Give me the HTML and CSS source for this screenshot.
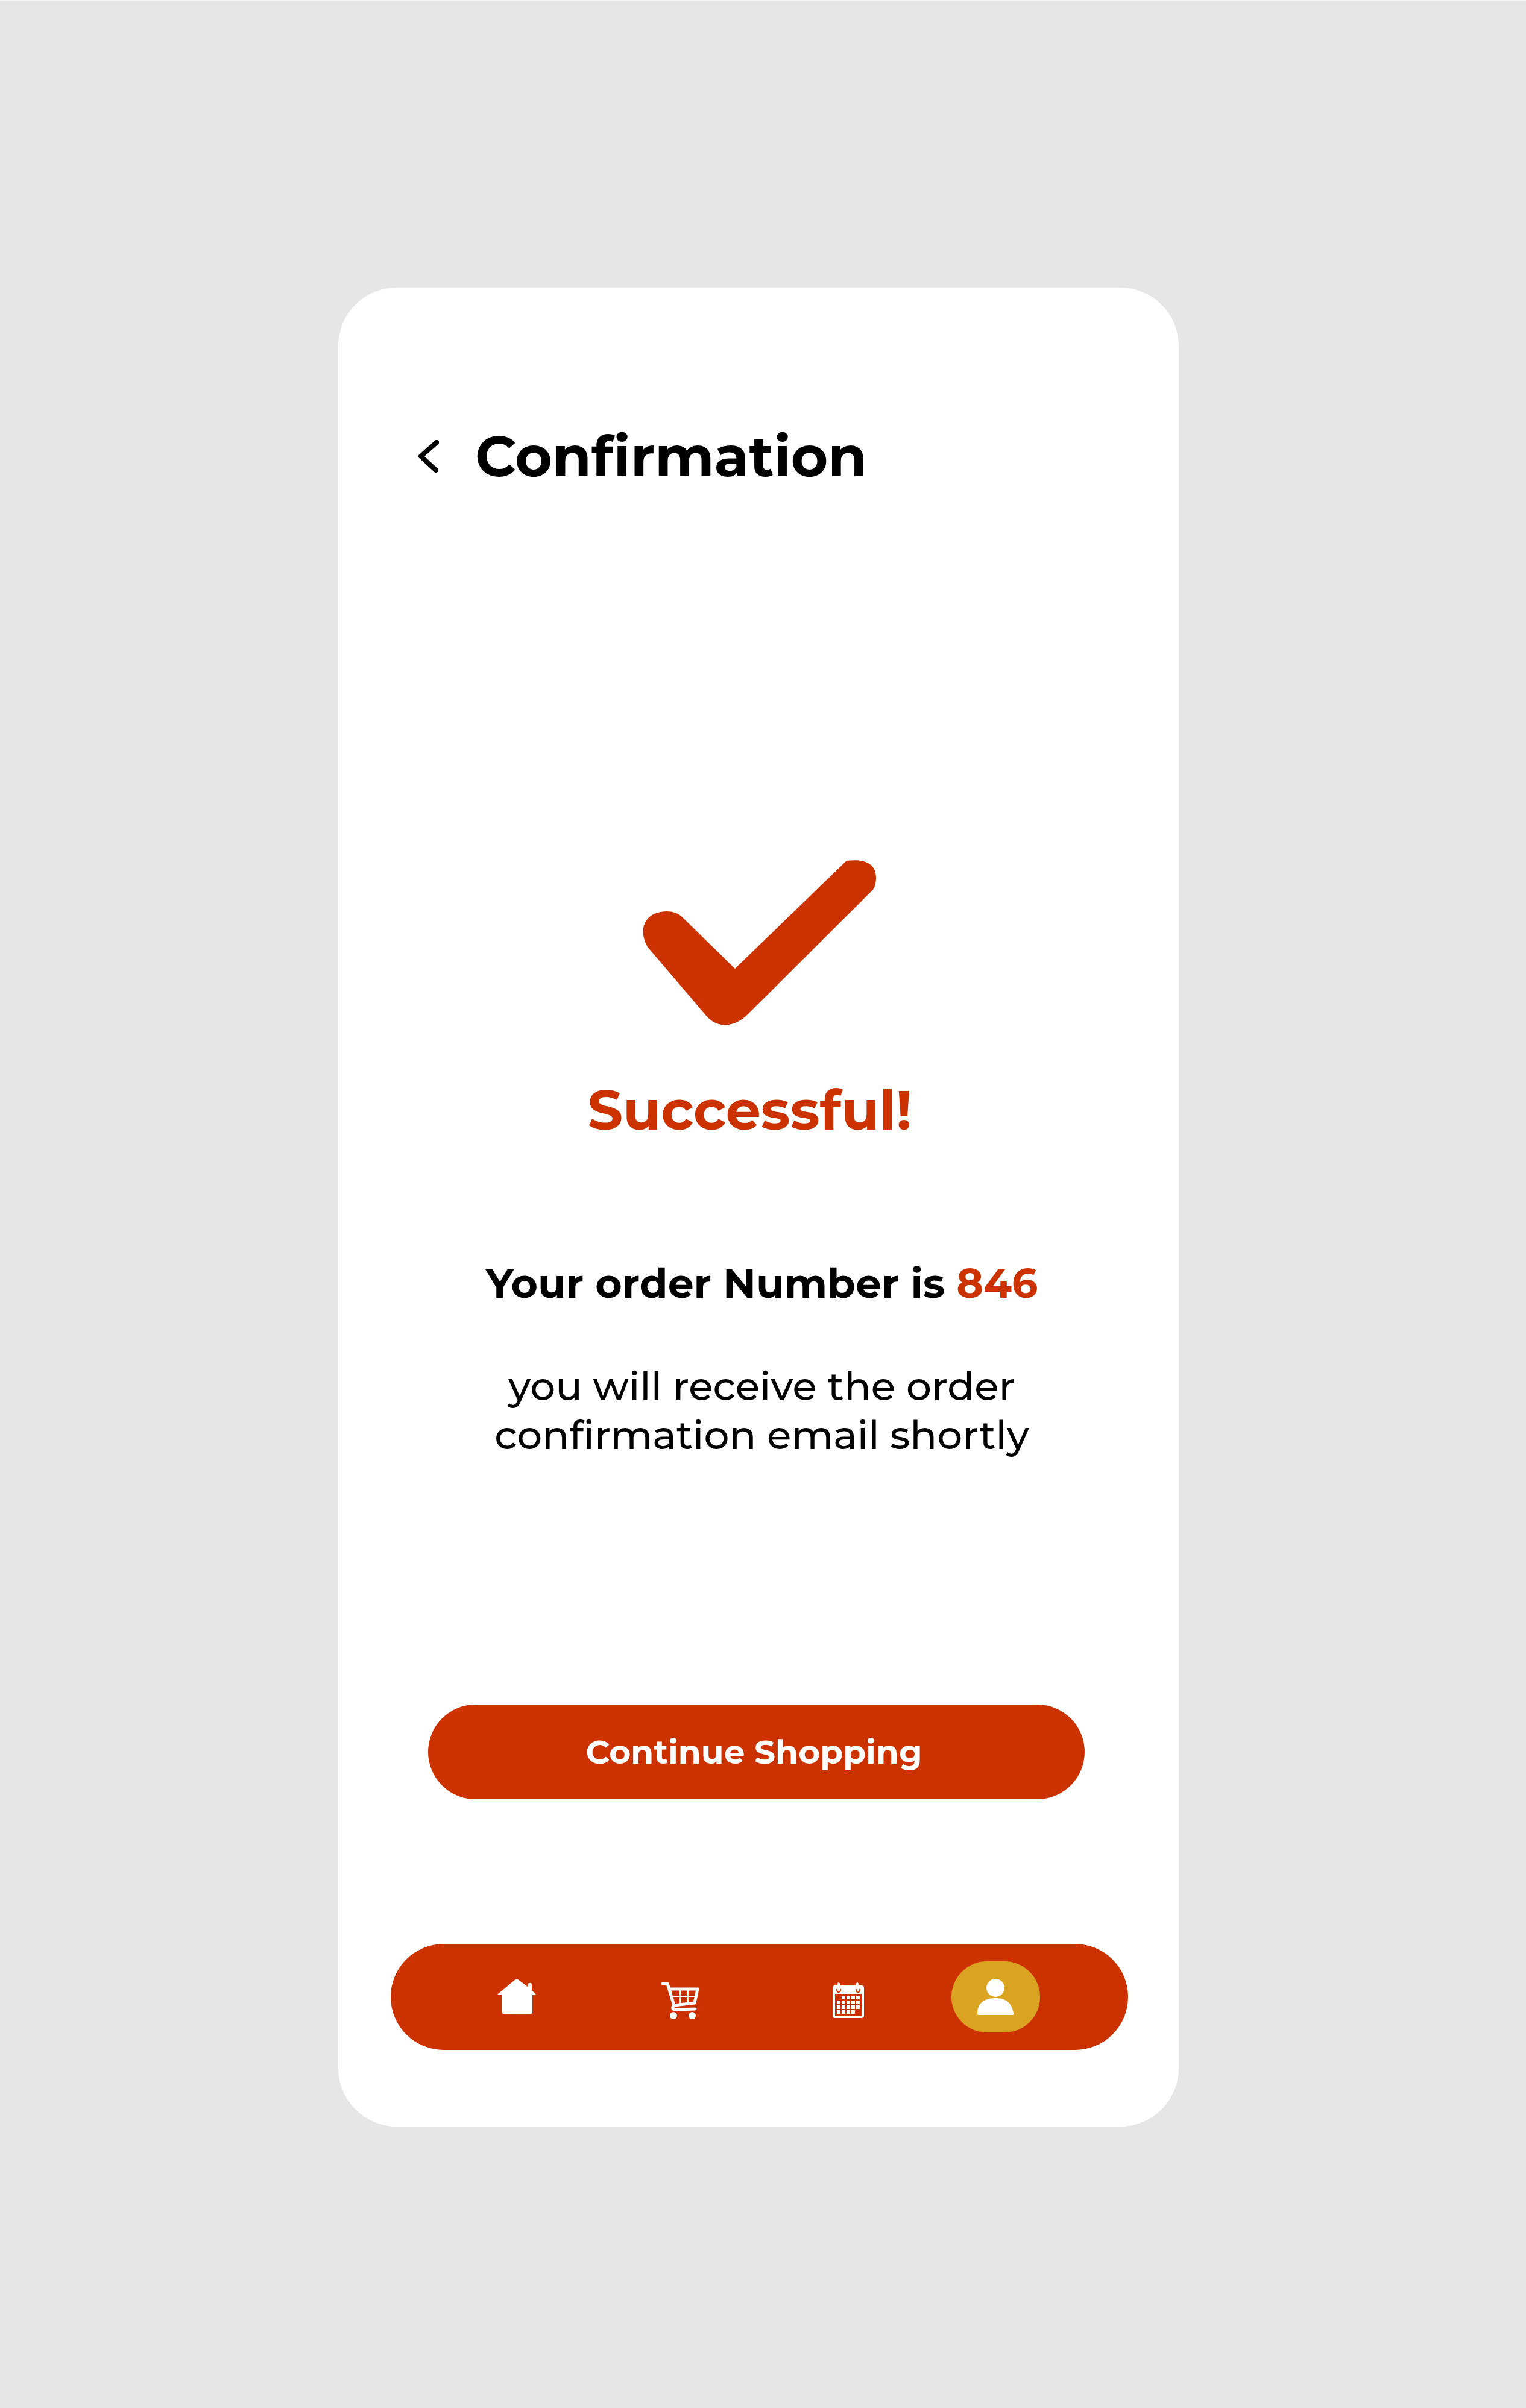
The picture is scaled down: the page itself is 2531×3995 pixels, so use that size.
FILE: index.html
```html
<!DOCTYPE html>
<html lang="en">
<head>
<meta charset="utf-8">
<meta name="viewport" content="width=device-width, initial-scale=1">
<title>Confirmation</title>
<link rel="stylesheet" href="styles.css">
</head>
<body>
<main class="screen">
  <header class="header">
    <button class="back" type="button" aria-label="Back">
      <svg viewBox="0 0 34 54" width="34" height="54" aria-hidden="true"><path d="M30 4 4 27l25 23" fill="none" stroke="currentColor" stroke-width="8" stroke-linecap="round" stroke-linejoin="round"/></svg>
    </button>
    <h1 class="title">Confirmation</h1>
  </header>

  <section class="result">
    <svg class="check" viewBox="0 0 388 274" width="388" height="274" aria-hidden="true"><path d="M338 1C364-2 387 3 387 29Q387 42 382 49L173 257C152 277 125 280 106 259L8 144C-8 116 2 86 39 85Q56 85 65 94L153 180Z" fill="currentColor"/></svg>
    <h2 class="status">Successful!</h2>
    <p class="order">Your order Number is <span class="number">846</span></p>
    <p class="note">you will receive the order<br>confirmation email shortly</p>
  </section>

  <button class="continue" type="button">Continue Shopping</button>

  <nav class="tabs" aria-label="Main">
    <a class="tab" href="#home" aria-label="Home">
      <svg viewBox="0 0 64 60" width="64" height="60" aria-hidden="true"><path d="M30 1q2-1 4 0l16 12 1-4q0-2 2-2h2q2 0 2 2v10l6 6q2 2-1 2h-4v29q0 2-3 2H10q-3 0-3-3V27H2q-3 0-1-2z" fill="currentColor"/></svg>
    </a>
    <a class="tab tab-low" href="#cart" aria-label="Cart">
      <svg viewBox="0 0 64 62" width="64" height="62" aria-hidden="true"><g fill="none" stroke="currentColor" stroke-linecap="round" stroke-linejoin="round"><path d="M3 3h8l11 36 34-4 5-23H15M22 39c-5 5-1 8 5 7l30-1" stroke-width="5"/><path d="M17 24h41M32 12v25M45 12v23" stroke-width="2"/></g><circle cx="21" cy="56" r="6" fill="currentColor"/><circle cx="52" cy="56" r="6" fill="currentColor"/></svg>
    </a>
    <a class="tab tab-low" href="#calendar" aria-label="Calendar">
      <svg viewBox="0 0 52 60" width="52" height="60" aria-hidden="true"><path d="M4 5h4V2q2-4 4 0v3h27V2q2-4 4 0v3h5q4 0 4 4v46q0 4-4 4H4q-4 0-4-4V9q0-4 4-4z" fill="currentColor"/><path d="M7 11c-1 7 7 7 6 0M39 11c-1 7 7 7 6 0" fill="none" stroke="#cb3200" stroke-width="2"/><path d="M4 19h44v36H4z" fill="#cb3200"/><path d="M15 22h6v6h-6zM23 22h6v6h-6zM31 22h6v6h-6zM39 22h6v6h-6zM7 30h6v6H7zM15 30h6v6h-6zM23 30h6v6h-6zM31 30h6v6h-6zM39 30h6v6h-6zM7 38h6v6H7zM15 38h6v6h-6zM23 38h6v6h-6zM31 38h6v6h-6zM39 38h6v6h-6zM7 46h6v6H7zM15 46h6v6h-6zM23 46h6v6h-6zM31 46h6v6h-6z" fill="currentColor"/></svg>
    </a>
    <a class="tab tab-active" href="#profile" aria-label="Profile" aria-current="page">
      <svg viewBox="0 0 61 60" width="61" height="60" aria-hidden="true"><ellipse cx="30" cy="15" rx="15" ry="15" fill="currentColor"/><path d="M2 60Q0 60 0 58C0 40 12 32 30 32S57 40 60 57Q61 60 58 60Z" fill="currentColor"/></svg>
    </a>
  </nav>
</main>
</body>
</html>
```
FILE: styles.css
```css
* {
  box-sizing: border-box;
}

body {
  margin: 0;
  padding: 476px 576px 466px 561px;
  border-top: 1px solid #f3f3f3;
  background: #e6e6e6;
  color: #000;
  font-family: Montserrat, Inter, sans-serif;
}

h1, h2, p {
  margin: 0;
}

button {
  border: 0;
  padding: 0;
  font: inherit;
  cursor: pointer;
}

.screen {
  display: flex;
  flex-direction: column;
  padding: 220px 84px 127px 87px;
  border-radius: 97px;
  background: #fff;
}

.header {
  display: flex;
  align-items: center;
  gap: 60px;
  padding-left: 46px;
}

.back {
  display: flex;
  background: none;
  color: inherit;
}

.title {
  font-size: 94px;
  line-height: 120px;
  font-weight: 700;
}

.result {
  display: flex;
  flex-direction: column;
  align-items: center;
  padding-top: 610px;
  text-align: center;
}

.check {
  color: #cb3200;
}

.status {
  margin-top: 80px;
  padding-right: 32px;
  color: #cb3200;
  font-size: 92px;
  line-height: 120px;
  font-weight: 700;
}

.order {
  margin-top: 186px;
  padding-left: 8px;
  font-size: 68px;
  line-height: 84px;
  font-weight: 700;
}

.number {
  color: #cb3200;
}

.note {
  margin-top: 88px;
  padding-left: 8px;
  font-size: 66px;
  line-height: 81px;
  font-weight: 500;
}

.continue {
  margin: 407px 72px 0 62px;
  padding: 43px 8px 42px 0;
  border-radius: 79px;
  background: #cb3200;
  color: #fff;
  font-size: 55px;
  line-height: 72px;
  font-weight: 700;
}

.tabs {
  display: grid;
  grid-template-columns: 271fr 285fr 197fr 147fr;
  align-items: center;
  justify-items: start;
  margin-top: 240px;
  padding: 29px 146px 29px 177px;
  border-radius: 88px;
  background: #cb3200;
}

.tab {
  display: flex;
  color: #fff;
}

.tab-low {
  padding-top: 12px;
}

.tab-active {
  padding: 29px 43px;
  border-radius: 59px;
  background: #dba322;
}
```
